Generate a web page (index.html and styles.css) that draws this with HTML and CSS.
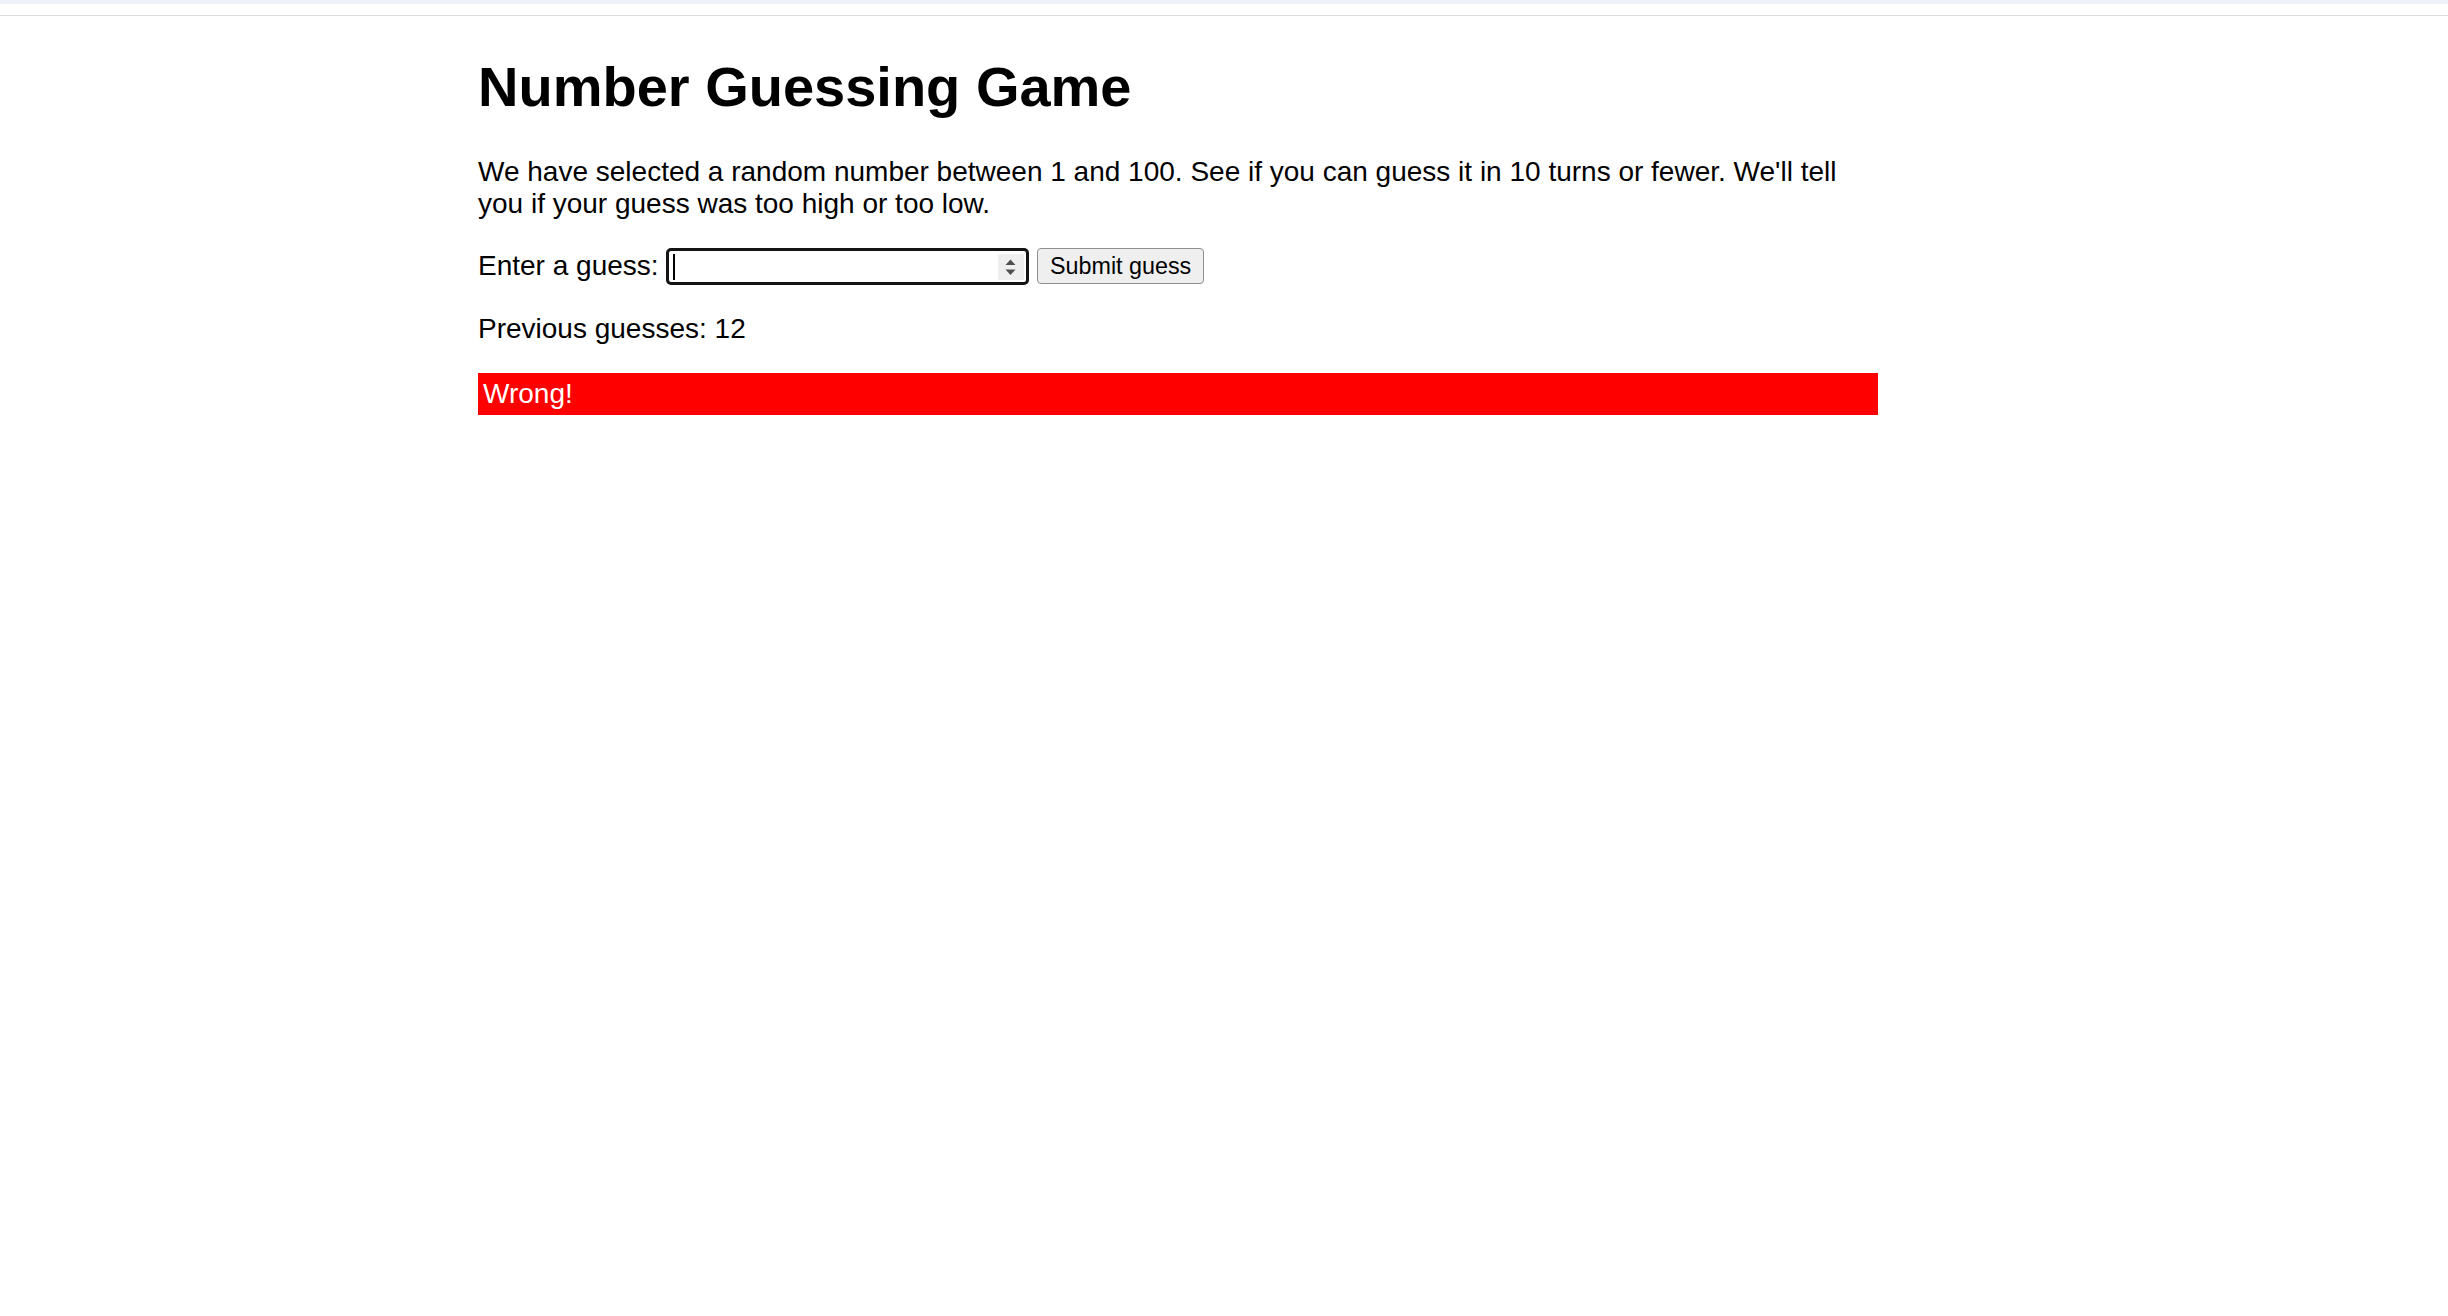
FILE: index.html
```html
<!DOCTYPE html>
<html lang="en">
<head>
<meta charset="utf-8">
<title>Number Guessing Game</title>
<link rel="stylesheet" href="styles.css">
</head>
<body>
<div class="chrome-bar"></div>
<main class="page">
  <h1 class="title">Number Guessing Game</h1>
  <p class="intro">We have selected a random number between 1 and 100. See if you can guess it in 10 turns or fewer. We'll tell you if your guess was too high or too low.</p>
  <div class="form">
    <label class="label" for="guessField">Enter a guess:</label>
    <div class="guess-field" id="guessField" role="spinbutton" aria-valuemin="1" aria-valuemax="100">
      <span class="caret"></span>
      <svg class="spinner" width="26" height="26" viewBox="0 0 26 26">
        <rect x="0" y="0" width="26" height="26" fill="#efefef"/>
        <polygon points="12.5,5.5 7.5,11 17.5,11" fill="#505050"/>
        <polygon points="7.5,15.5 17.5,15.5 12.5,21" fill="#505050"/>
      </svg>
    </div>
    <button class="submit" type="button">Submit guess</button>
  </div>
  <div class="results">
    <p class="guesses">Previous guesses: 12</p>
    <p class="last-result">Wrong!</p>
  </div>
</main>
</body>
</html>
```

FILE: styles.css
```css
html {
  font-family: "Liberation Sans", Arial, sans-serif;
}

body {
  margin: 0;
  background: #ffffff;
  color: #000000;
  font-size: 28px;
}

.chrome-bar {
  height: 11px;
  border-top: 4px solid #ecf1f9;
  border-bottom: 1px solid #dcdcdc;
  background: #ffffff;
}

.page {
  width: 1400px;
  margin-left: 478px;
  display: flow-root;
}

.title {
  font-size: 56px;
  font-weight: bold;
  margin: 37.5px 0;
  line-height: normal;
}

.intro {
  margin: 28px 0;
  line-height: normal;
}

.form {
  display: flex;
  align-items: flex-start;
  gap: 7.8px;
}

.label {
  line-height: normal;
  padding-top: 1.5px;
}

.guess-field {
  box-sizing: border-box;
  width: 363px;
  height: 37px;
  border: 3px solid #141414;
  border-radius: 5px;
  background: #ffffff;
  display: flex;
  align-items: center;
  padding: 0 2px 0 4px;
}

.caret {
  width: 2px;
  height: 26px;
  background: #000000;
}

.spinner {
  margin-left: auto;
  display: block;
}

.submit {
  box-sizing: border-box;
  width: 167px;
  height: 36px;
  padding: 0;
  font-family: "Liberation Sans", Arial, sans-serif;
  font-size: 23.3px;
  color: #000000;
  background: #efefef;
  border: 1.5px solid #8f8f8f;
  border-radius: 4px;
  line-height: normal;
}

.results {
  margin-top: 28px;
}

.guesses {
  margin: 28px 0;
  line-height: normal;
}

.last-result {
  margin: 28px 0;
  padding: 5px;
  background: #ff0000;
  color: #ffffff;
  line-height: normal;
}
```
